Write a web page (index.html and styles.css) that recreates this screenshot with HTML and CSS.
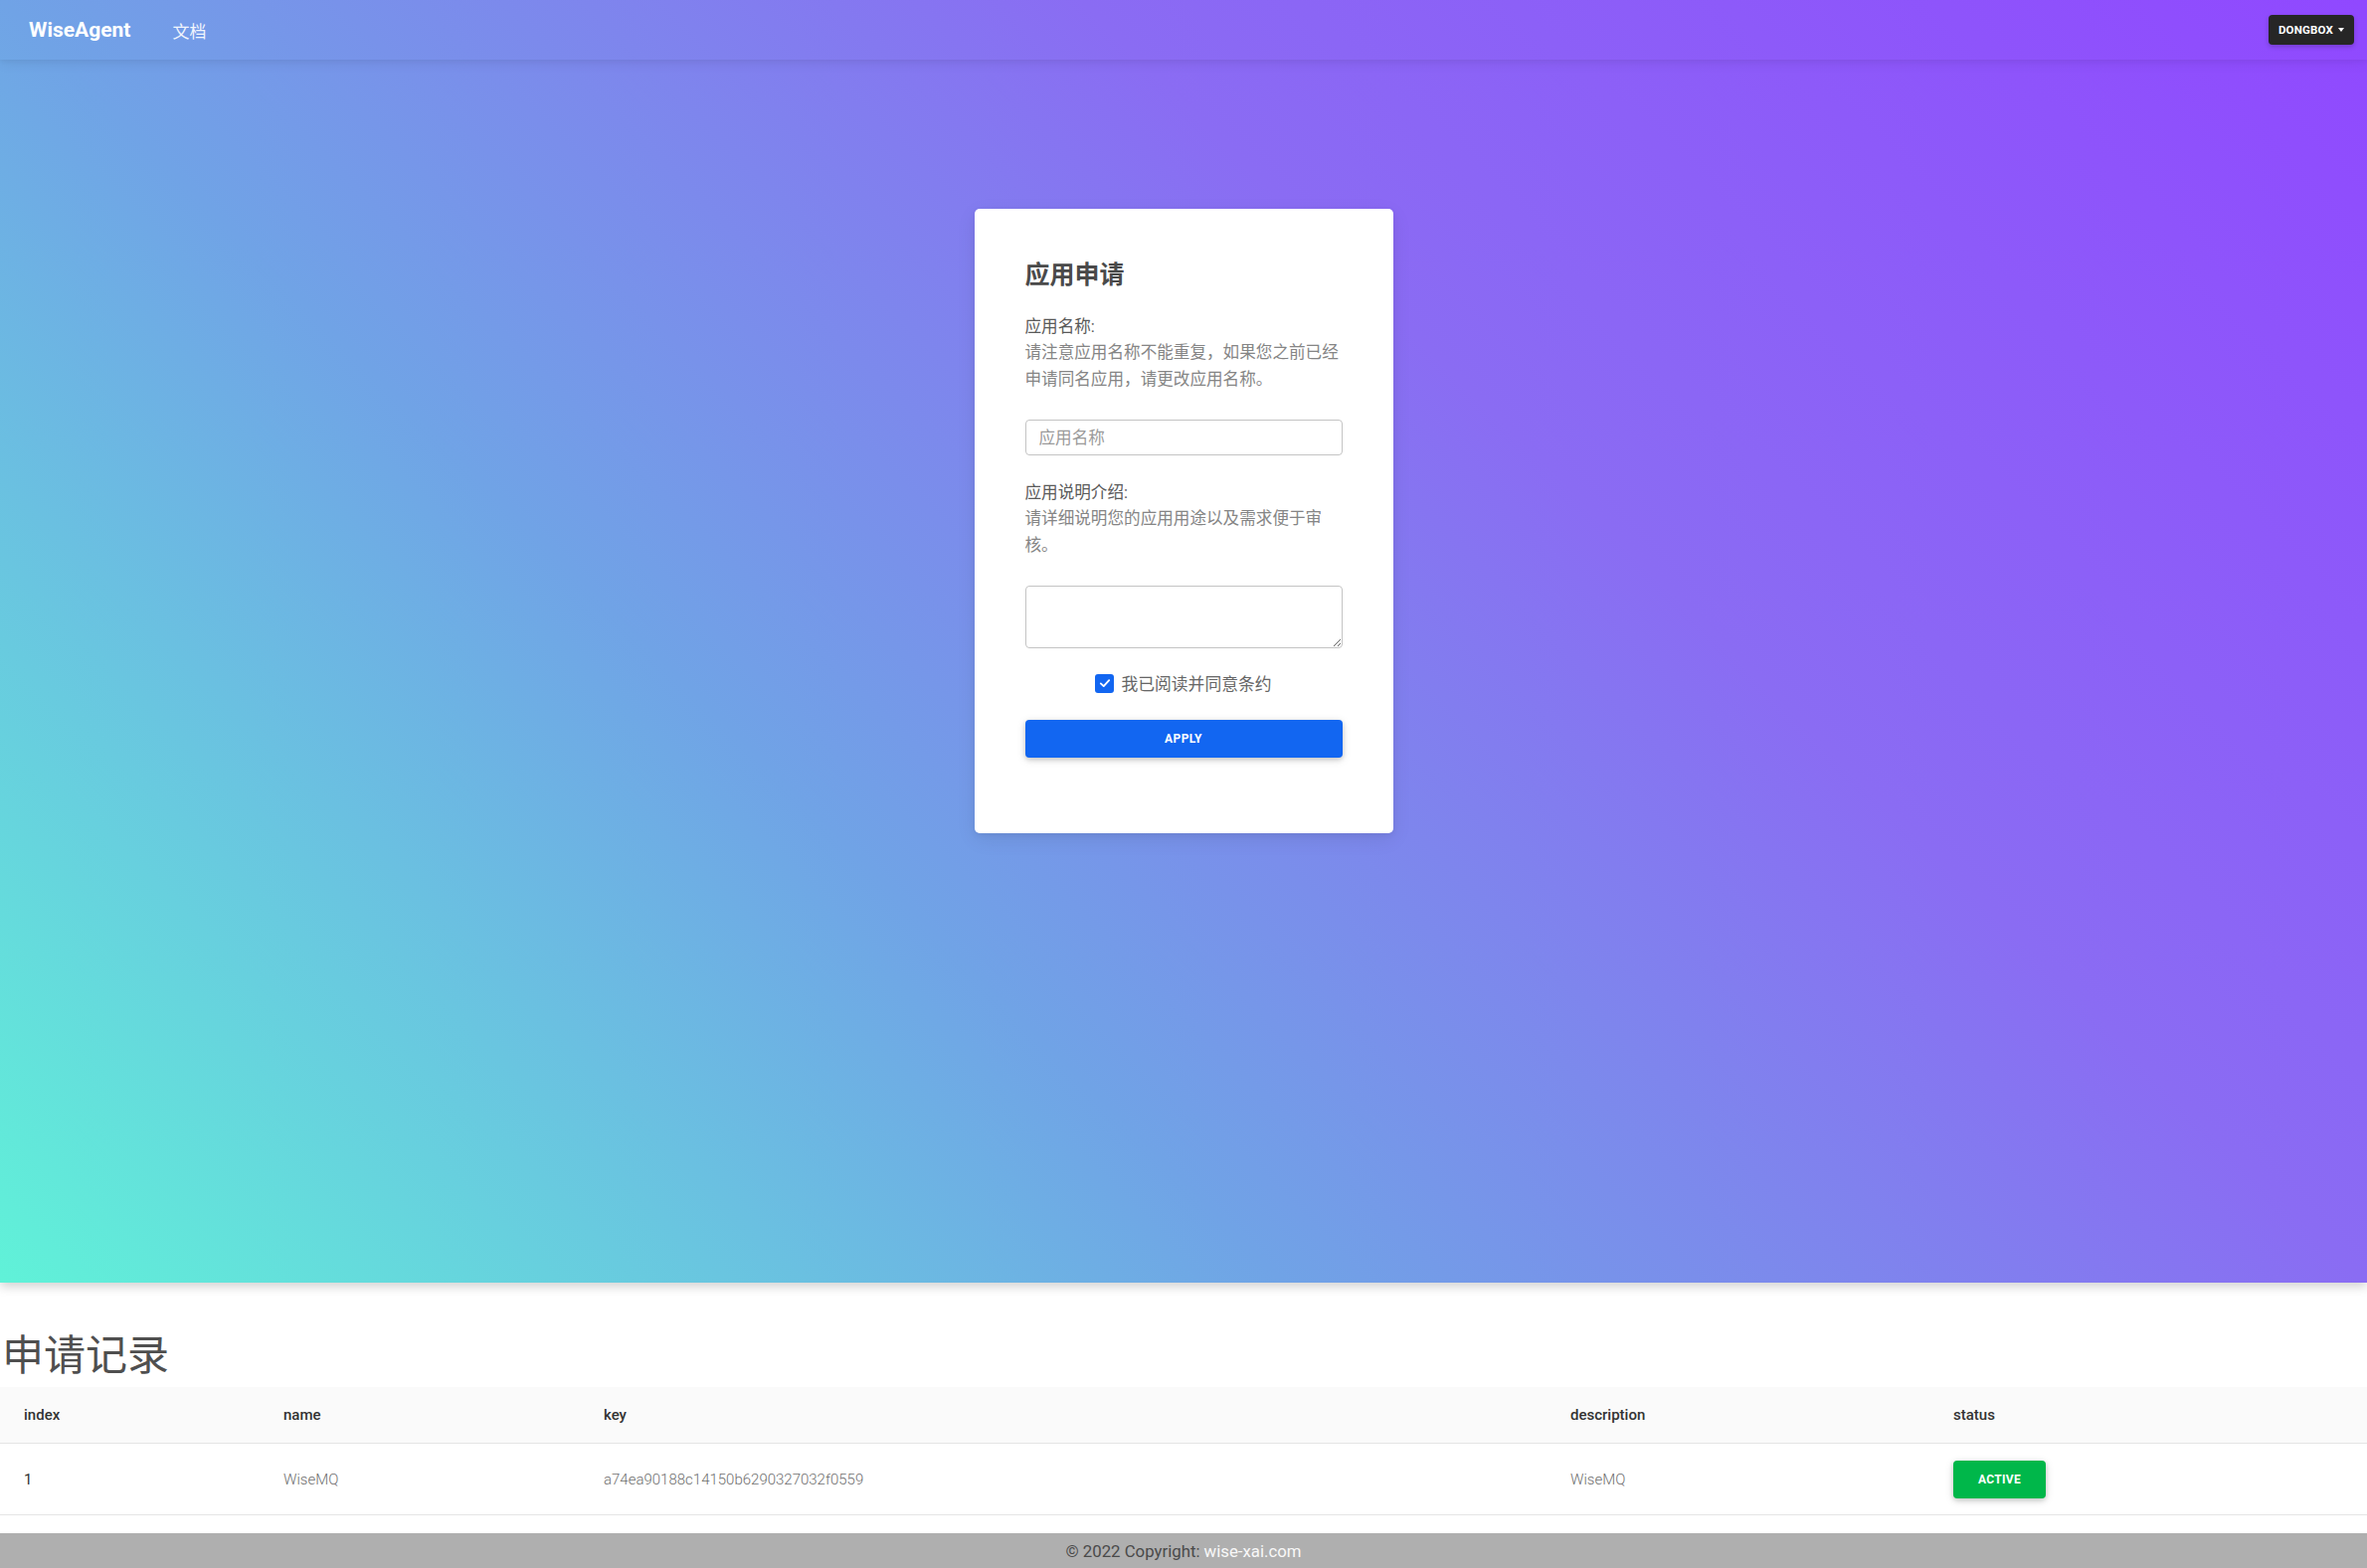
FILE: index.html
```html
<!DOCTYPE html>
<html lang="zh">
<head>
<meta charset="utf-8">
<title>WiseAgent</title>
<link rel="stylesheet" href="styles.css">
</head>
<body>
<section class="hero">
  <nav class="navbar">
    <div class="nav-left">
      <a class="brand">WiseAgent</a>
      <a class="nav-link">文档</a>
    </div>
    <button class="user-btn">DONGBOX<span class="caret"></span></button>
  </nav>
  <div class="hero-body">
    <form class="card">
      <h3 class="card-title">应用申请</h3>
      <p class="field-label">应用名称:<br><span class="hint">请注意应用名称不能重复，如果您之前已经申请同名应用，请更改应用名称。</span></p>
      <input class="text-input" type="text" placeholder="应用名称">
      <p class="field-label second">应用说明介绍:<br><span class="hint">请详细说明您的应用用途以及需求便于审核。</span></p>
      <textarea class="text-area"></textarea>
      <label class="check-row">
        <span class="check-box"><svg viewBox="0 0 20 20" width="14" height="14"><path d="M4 10.5 L8.2 14.5 L16 6" fill="none" stroke="#fff" stroke-width="2.6" stroke-linecap="round" stroke-linejoin="round"/></svg></span>
        <span class="check-text">我已阅读并同意条约</span>
      </label>
      <button type="button" class="apply-btn">APPLY</button>
    </form>
  </div>
</section>

<section class="records">
  <h2 class="records-title">申请记录</h2>
  <table class="records-table">
    <colgroup>
      <col class="c-index"><col class="c-name"><col class="c-key"><col class="c-desc"><col class="c-status">
    </colgroup>
    <thead>
      <tr><th>index</th><th>name</th><th>key</th><th>description</th><th>status</th></tr>
    </thead>
    <tbody>
      <tr>
        <td class="idx">1</td>
        <td>WiseMQ</td>
        <td>a74ea90188c14150b6290327032f0559</td>
        <td>WiseMQ</td>
        <td><span class="badge-active">ACTIVE</span></td>
      </tr>
    </tbody>
  </table>
</section>

<footer class="footer">© 2022 Copyright: <a class="footer-link">wise-xai.com</a></footer>
</body>
</html>
```

FILE: styles.css
```css
* { box-sizing: border-box; }
html { overflow: hidden; }
html, body { margin: 0; padding: 0; }
body {
  font-family: Roboto, "Noto Sans CJK SC", sans-serif;
  color: #4f4f4f;
  background: #fff;
}

.hero {
  height: 1290px;
  display: flex;
  flex-direction: column;
  background: linear-gradient(45deg, #60f2d8 0%, #70a3e6 35.2%, #8a6cf3 64.8%, #9048ff 100%);
  box-shadow: 0 4px 10px rgba(0, 0, 0, 0.18);
  position: relative;
  z-index: 1;
}

.navbar {
  height: 60px;
  flex: none;
  display: flex;
  align-items: center;
  justify-content: space-between;
  padding: 0 13px 0 29px;
  box-shadow: 0 4px 12px rgba(0, 0, 0, 0.06), 0 2px 4px rgba(0, 0, 0, 0.04);
}
.nav-left { display: flex; align-items: center; }
.brand {
  font-size: 21px;
  font-weight: 700;
  color: #fff;
}
.nav-link {
  margin-left: 42px;
  font-size: 17px;
  color: rgba(255, 255, 255, 0.92);
}
.user-btn {
  height: 30px;
  width: 86px;
  border: none;
  border-radius: 4px;
  background: #262626;
  color: #fff;
  font-family: Roboto, sans-serif;
  font-size: 11.5px;
  font-weight: 700;
  letter-spacing: 0.2px;
  display: flex;
  align-items: center;
  justify-content: center;
  padding: 0;
  box-shadow: 0 2px 5px rgba(0, 0, 0, 0.2);
}
.caret {
  margin-left: 5px;
  width: 0;
  height: 0;
  border-top: 4px solid #fff;
  border-left: 3.5px solid transparent;
  border-right: 3.5px solid transparent;
}

.hero-body {
  flex: 1;
  display: flex;
  justify-content: center;
  align-items: flex-start;
  padding-top: 150px;
}
.card {
  width: 421px;
  background: #fff;
  border-radius: 5px;
  padding: 52px 51px 76px;
  box-shadow: 0 6px 20px rgba(0, 0, 0, 0.08), 0 2px 6px rgba(0, 0, 0, 0.05);
  display: flex;
  flex-direction: column;
  margin: 0;
}
.card-title {
  margin: 0 0 23.6px;
  font-size: 25px;
  line-height: 30px;
  font-weight: 700;
  color: #4a4a4a;
}
.field-label {
  margin: 0;
  font-size: 16.6px;
  line-height: 26.7px;
  color: #5a5a5a;
}
.field-label.second { margin-top: 24.6px; }
.hint { color: #858585; }

.text-input {
  margin-top: 26.4px;
  height: 36px;
  width: 100%;
  border: 1px solid #c4c4c4;
  border-radius: 4px;
  padding: 0 13px;
  font-family: Roboto, "Noto Sans CJK SC", sans-serif;
  font-size: 16.6px;
  color: #4f4f4f;
  background: #fff;
  outline: none;
}
.text-input::placeholder { color: #9a9a9a; }
.text-area {
  display: block;
  margin-top: 26.3px;
  height: 63px;
  width: 100%;
  border: 1px solid #c4c4c4;
  border-radius: 4px;
  padding: 8px 13px;
  font-family: Roboto, "Noto Sans CJK SC", sans-serif;
  font-size: 16.6px;
  background: #fff;
  outline: none;
}

.check-row {
  margin-top: 23px;
  height: 24px;
  display: flex;
  align-items: center;
  justify-content: center;
  gap: 7px;
}
.check-box {
  width: 19px;
  height: 19px;
  border-radius: 3px;
  background: #1266f1;
  display: flex;
  align-items: center;
  justify-content: center;
}
.check-text {
  font-size: 16.8px;
  color: #666;
}

.apply-btn {
  margin-top: 25px;
  height: 38px;
  width: 100%;
  border: none;
  border-radius: 4px;
  background: #1266f1;
  color: #fff;
  font-family: Roboto, sans-serif;
  font-size: 12px;
  font-weight: 700;
  letter-spacing: 0.4px;
  box-shadow: 0 2px 5px rgba(0, 0, 0, 0.16), 0 2px 10px rgba(0, 0, 0, 0.12);
}

.records-title {
  margin: 49.4px 0 6.4px 2px;
  font-size: 42px;
  line-height: 49.2px;
  font-weight: 400;
  color: #4f4f4f;
}
.records-table {
  width: 100%;
  border-collapse: collapse;
  table-layout: fixed;
  font-size: 15px;
}
.c-index { width: 261px; }
.c-name { width: 322px; }
.c-key { width: 972px; }
.c-desc { width: 385px; }
.c-status { width: 440px; }
.records-table th {
  height: 57px;
  padding: 0 24px;
  text-align: left;
  font-weight: 500;
  color: #333;
  background: #fafafa;
  border-bottom: 1px solid #e5e5e5;
}
.records-table td {
  height: 72px;
  padding: 0 24px;
  font-weight: 300;
  color: #707070;
  border-bottom: 1px solid #e5e5e5;
}
.records-table td.idx {
  font-weight: 400;
  color: #333;
}
.badge-active {
  display: inline-flex;
  align-items: center;
  justify-content: center;
  width: 93px;
  height: 38px;
  border-radius: 4px;
  background: #00b74a;
  color: #fff;
  font-size: 12px;
  font-weight: 700;
  letter-spacing: 0.3px;
  box-shadow: 0 2px 5px rgba(0, 0, 0, 0.16), 0 2px 10px rgba(0, 0, 0, 0.12);
}

.footer {
  margin-top: 18px;
  background: #afafaf;
  text-align: center;
  padding: 6px 0 16px;
  font-size: 16.8px;
  line-height: 24px;
  color: #4a4a4a;
}
.footer-link { color: #f8f8f8; }
```
